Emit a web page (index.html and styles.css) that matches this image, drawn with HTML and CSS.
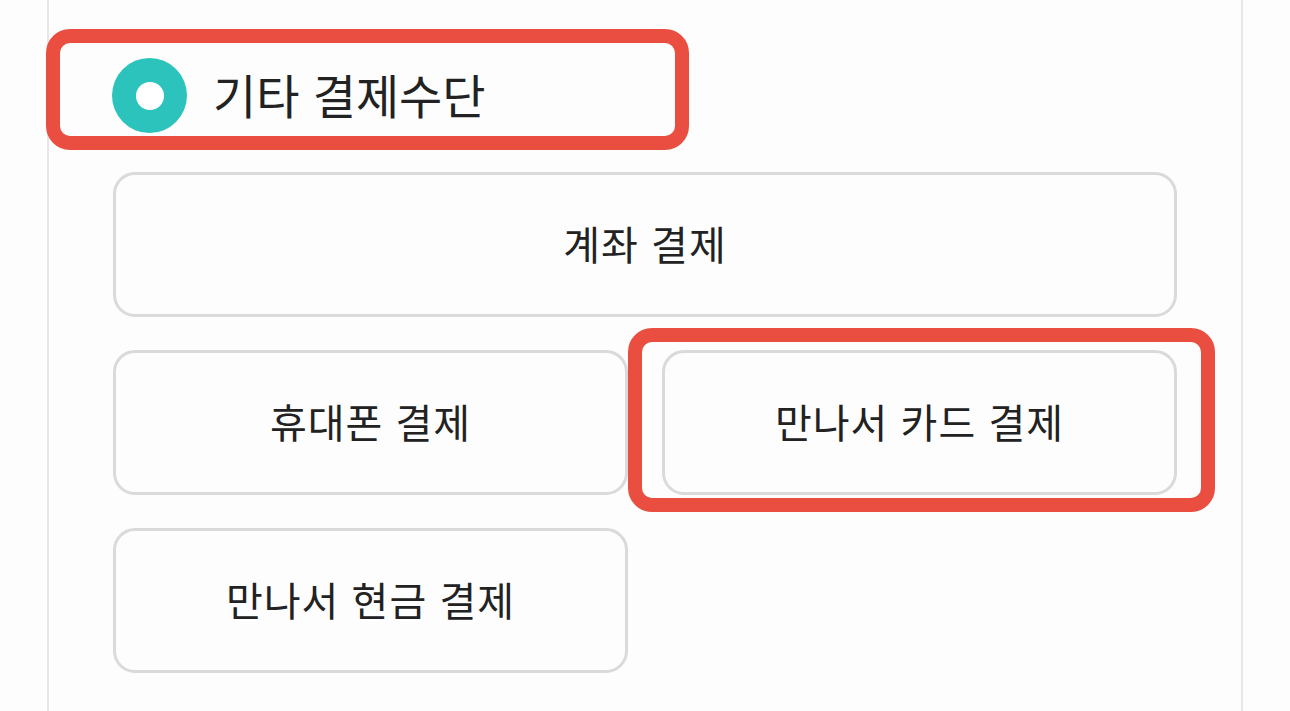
FILE: index.html
```html
<!DOCTYPE html>
<html lang="ko">
<head>
  <meta charset="UTF-8">
  <title>기타 결제수단</title>
  <link rel="stylesheet" href="styles.css">
</head>
<body>
  <div class="panel">
    <label class="method">
      <span class="radio"></span>
      <span class="method-name">기타 결제수단</span>
      <span class="mark mark-method"></span>
    </label>

    <div class="options">
      <button class="option wide">계좌 결제</button>
      <button class="option">휴대폰 결제</button>
      <button class="option picked">
        만나서 카드 결제
        <span class="mark mark-option"></span>
      </button>
      <button class="option">만나서 현금 결제</button>
    </div>
  </div>
</body>
</html>
```

FILE: styles.css
```css
html, body {
  margin: 0;
  height: 100%;
  background: #fdfdfd;
  overflow: hidden;
}
body {
  font-family: "Noto Sans CJK KR", "Noto Sans", sans-serif;
  color: #222;
}
.panel {
  box-sizing: border-box;
  margin-left: 47px;
  width: 1196px;
  height: 100%;
  border-left: 2px solid #e6e6e8;
  border-right: 2px solid #e6e6e8;
  padding: 58px 64px 0 64px;
}
.method {
  position: relative;
  display: flex;
  align-items: center;
  gap: 26px;
  height: 75px;
  margin-left: -1px;
}
.radio {
  width: 75px;
  height: 75px;
  border-radius: 50%;
  background: #2cc3bd;
  display: flex;
  align-items: center;
  justify-content: center;
  flex-shrink: 0;
}
.radio::after {
  content: "";
  width: 28px;
  height: 28px;
  border-radius: 50%;
  background: #fff;
}
.method-name {
  font-size: 47px;
  line-height: 1;
  padding-bottom: 4px;
}
.options {
  display: grid;
  grid-template-columns: 1fr 1fr;
  column-gap: 34px;
  row-gap: 33px;
  margin-top: 39px;
}
.option {
  position: relative;
  height: 145px;
  border: 3px solid #dadada;
  border-radius: 22px;
  background: #fdfdfd;
  font-family: inherit;
  font-size: 40px;
  color: #222;
  letter-spacing: 1px;
  padding: 0 0 4px 0;
}
.option.wide {
  grid-column: 1 / 3;
}
.mark {
  position: absolute;
  border: 14px solid #e94e40;
  border-radius: 24px;
  pointer-events: none;
}
.mark-method {
  left: -66px;
  top: -29px;
  width: 615px;
  height: 93px;
}
.mark-option {
  left: -37px;
  top: -25px;
  right: -41px;
  bottom: -20px;
}
```
